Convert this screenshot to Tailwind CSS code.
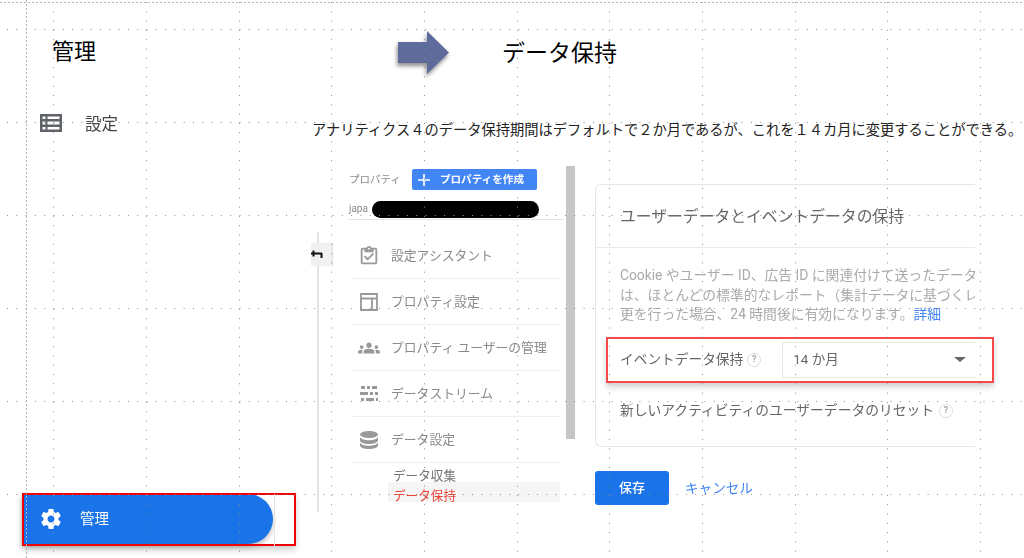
<html>

<head>
    <meta charset="UTF-8">
    <meta name="viewport" content="width=device-width, initial-scale=1.0">
    <title>データ保持</title>
    <script src="https://cdn.jsdelivr.net/npm/@tailwindcss/browser@4"></script>
</head>

<body class="bg-white">
    <div class="relative flex w-[1024px] h-[558px] overflow-hidden bg-white text-black font-['Noto_Sans_CJK_JP',sans-serif]">

        <!-- Left column -->
        <div class="flex flex-col w-[300px] shrink-0 h-full">
            <h1 class="ml-[52px] mt-[34px] text-[22px] leading-[30px]">管理</h1>
            <div class="flex items-center ml-[40px] mt-[47px] h-[24px] text-[#444] blur-[0.3px]">
                <svg class="w-[22px] h-[18px]" viewBox="0 0 22 18" fill="#5f6368">
                    <path d="M0 0h22v18H0zM2.500 2.500v2.500h3V2.500zm5 0v2.500h12V2.500zM2.500 7.500v3h3v-3zm5 0v3h12v-3zM2.500 13v2.500h3V13zm5 0v2.500h12V13z" fill-rule="evenodd" />
                </svg>
                <span class="ml-[23px] text-[16.500px] leading-[24px]">設定</span>
            </div>
            <!-- Active menu -->
            <div class="relative ml-[22px] mt-[359px] w-[251px] h-[50px] flex items-center bg-[#1a73e8] rounded-r-[25px] text-white shadow-[0_3px_5px_rgba(0,0,0,0.25)] blur-[0.3px]">
                <svg class="ml-[17px] w-[24px] h-[24px]" viewBox="0 0 24 24" fill="#fff">
                    <path d="M19.430 12.980c.04-.32.07-.64.07-.98s-.03-.66-.07-.98l2.110-1.650c.19-.15.24-.42.12-.64l-2-3.460c-.12-.22-.39-.3-.61-.22l-2.490 1c-.52-.4-1.080-.73-1.690-.98l-.38-2.650C14.460 2.180 14.250 2 14 2h-4c-.25 0-.46.18-.49.42l-.38 2.650c-.61.25-1.170.59-1.690.98l-2.490-1c-.23-.09-.49 0-.61.22l-2 3.460c-.13.22-.07.49.12.64l2.110 1.650c-.04.32-.07.65-.07.98s.03.66.07.98l-2.110 1.650c-.19.15-.24.42-.12.64l2 3.460c.12.22.39.3.61.22l2.490-1c.52.4 1.080.73 1.690.98l.38 2.650c.03.24.24.42.49.42h4c.25 0 .46-.18.49-.42l.38-2.650c.61-.25 1.170-.59 1.690-.98l2.490 1c.23.09.49 0 .61-.22l2-3.460c.12-.22.07-.49-.12-.64l-2.110-1.650zM12 15.500c-1.930 0-3.500-1.570-3.500-3.500s1.570-3.500 3.500-3.500 3.500 1.570 3.500 3.500-1.570 3.500-3.500 3.500z" />
                </svg>
                <span class="ml-[17px] mb-[2px] text-[14.500px]">管理</span>
            </div>
        </div>

        <!-- Right column -->
        <div class="flex flex-col flex-1 min-w-0">
            <div class="flex items-center ml-[98px] mt-[31px] h-[43px]">
                <svg class="w-[51px] h-[43px] drop-shadow-[-1px_3px_2px_rgba(0,0,0,0.45)]" viewBox="0 0 51 43" fill="#5f6b9b">
                    <path d="M0 11h29V0l22 21.500L29 43V32H0z" />
                </svg>
                <h2 class="ml-[53px] mb-[4px] text-[23px] leading-[30px]">データ保持</h2>
            </div>
            <p class="ml-[12px] mt-[45px] text-[14.260px] leading-[20px] whitespace-nowrap text-[#222]">アナリティクス４のデータ保持期間はデフォルトで２か月であるが、これを１４カ月に変更することができる。</p>

            <!-- Pasted screenshot -->
            <div class="flex mt-[26px] ml-[17px] h-[350px] blur-[0.3px] font-['Roboto','Noto_Sans_CJK_JP',sans-serif]">
                <!-- Side rail -->
                <div class="w-[32px] shrink-0 pt-[67px]">
                    <div class="w-[2px] h-[280px] bg-[#e3e3e3]"></div>
                </div>

                <!-- Property menu -->
                <div class="w-[215px] shrink-0 text-[#8a8a8a]">
                    <div class="flex items-center h-[21px] mt-[4px]">
                        <span class="text-[10.500px] leading-[21px]">プロパティ</span>
                        <button class="flex items-center ml-[11px] w-[125px] h-[21px] bg-[#4285f4] rounded-[2px] text-white text-[10.600px] font-bold">
                            <svg class="ml-[6px] w-[12px] h-[12px]" viewBox="0 0 12 12" stroke="#fff" stroke-width="1.700"><path d="M6 0v12M0 6h12" /></svg>
                            <span class="ml-[10px]">プロパティを作成</span>
                        </button>
                    </div>
                    <div class="flex items-center h-[19px] mt-[11px] border-b border-[#e9e2e2] text-[10px] pb-[4px]">
                        <span>japa</span>
                    </div>

                    <div class="mt-[13px] ml-[2px] w-[209px]">
                        <div class="flex items-center h-[46px] border-b border-[#efefef] text-[12.800px]">
                            <svg class="ml-[7px] w-[22px] h-[22px]" viewBox="0 0 24 24" fill="#999"><path d="M19 3h-4.180C14.400 1.840 13.300 1 12 1c-1.300 0-2.400.84-2.820 2H5c-1.100 0-2 .9-2 2v14c0 1.100.9 2 2 2h14c1.100 0 2-.9 2-2V5c0-1.100-.9-2-2-2zm-7 0c.55 0 1 .45 1 1s-.45 1-1 1-1-.45-1-1 .45-1 1-1zm7 16H5V5h2v3h10V5h2v14z" /><path d="M10.500 17l-4-4 1.410-1.410 2.590 2.580 5.590-5.580L17.500 10z" /></svg>
                            <span class="ml-[11px]">設定アシスタント</span>
                        </div>
                        <div class="flex items-center h-[46px] border-b border-[#efefef] text-[12.800px]">
                            <svg class="ml-[9px] w-[18px] h-[18px]" viewBox="0 0 18 18" fill="none" stroke="#999" stroke-width="1.800"><path d="M1 1h16v16H1zM1 5.500h16M12 5.500V17" /></svg>
                            <span class="ml-[13px]">プロパティ設定</span>
                        </div>
                        <div class="flex items-center h-[46px] border-b border-[#efefef] text-[12.800px]">
                            <svg class="ml-[7px] w-[22px] h-[22px]" viewBox="0 0 24 24" fill="#999"><path d="M12 12.750c1.630 0 3.070.39 4.240.9 1.080.48 1.760 1.560 1.760 2.730V18H6v-1.610c0-1.180.68-2.260 1.760-2.730 1.170-.52 2.610-.91 4.240-.91zM4 13c1.100 0 2-.9 2-2s-.9-2-2-2-2 .9-2 2 .9 2 2 2zm1.130 1.100C4.760 14.040 4.390 14 4 14c-.99 0-1.930.21-2.780.58C.48 14.900 0 15.620 0 16.430V18h4.500v-1.610c0-.83.23-1.610.63-2.290zM20 13c1.100 0 2-.9 2-2s-.9-2-2-2-2 .9-2 2 .9 2 2 2zm4 3.430c0-.81-.48-1.530-1.220-1.850C21.930 14.210 20.990 14 20 14c-.39 0-.76.04-1.130.1.4.68.63 1.460.63 2.290V18H24v-1.570zM12 6c1.660 0 3 1.340 3 3s-1.340 3-3 3-3-1.340-3-3 1.340-3 3-3z" /></svg>
                            <span class="ml-[11px]">プロパティ ユーザーの管理</span>
                        </div>
                        <div class="flex items-center h-[46px] border-b border-[#efefef] text-[12.800px]">
                            <svg class="ml-[9px] w-[18px] h-[18px]" viewBox="0 0 18 18" fill="#999"><path d="M1 1h4v3H1zM7 1h3v3H7zM12 1h5v3h-5zM0 7h8v3H0zM10 7h3v3h-3zM15 7h3v3h-3zM1 13h3v3H1zM6 13h8v3H6zM16 13h2v3h-2z" /></svg>
                            <span class="ml-[13px]">データストリーム</span>
                        </div>
                        <div class="flex items-center h-[46px] border-b border-[#efefef] text-[12.800px]">
                            <svg class="ml-[9px] w-[18px] h-[18px]" viewBox="0 0 18 18" fill="#999"><ellipse cx="9" cy="3.500" rx="9" ry="3.500" /><path d="M0 6c1 2.200 5 3.200 9 3.200S17 8.200 18 6v3.500c0 1.900-4 3.500-9 3.500s-9-1.600-9-3.500z" /><path d="M0 11.500c1 2.200 5 3.200 9 3.200s8-1 9-3.200v3c0 1.900-4 3.500-9 3.500s-9-1.600-9-3.500z" /></svg>
                            <span class="ml-[13px]">データ設定</span>
                        </div>
                        <div class="pl-[37px] mt-[3px]">
                            <p class="pl-[5px] h-[16px] text-[12.600px] leading-[20px] text-[#777]">データ収集</p>
                            <p class="pl-[5px] h-[20px] text-[12.600px] leading-[28px] text-[#ea4335] bg-[#f5f5f5]">データ保持</p>
                        </div>
                    </div>
                </div>

                <!-- Scrollbar -->
                <div class="ml-[2px] mt-[1px] w-[9px] h-[273px] shrink-0 bg-[#c6c6c6]"></div>

                <!-- Retention settings -->
                <div class="ml-[20px] w-[380px] shrink-0">
                    <div class="h-[263px] mt-[19px] border-[1.500px] border-r-0 border-[#e6e6e6] rounded-l-[6px] text-[#666]">
                        <h3 class="flex items-center h-[63px] pl-[24px] pt-[1px] text-[15.800px] border-b-[1.500px] border-[#ebebeb]">ユーザーデータとイベントデータの保持</h3>
                        <div class="pl-[24px] pt-[18px] text-[13.800px] leading-[19.500px] text-[#aaa] whitespace-nowrap overflow-hidden">
                            <p>Cookie やユーザー ID、広告 ID に関連付けて送ったデータ</p>
                            <p>は、ほとんどの標準的なレポート（集計データに基づくレ</p>
                            <p>更を行った場合、24 時間後に有効になります。<span class="text-[#4285f4]">詳細</span></p>
                        </div>
                        <div class="flex items-center pl-[24px] mt-[17px] h-[36px]">
                            <span class="text-[13.700px]">イベントデータ保持</span>
                            <span class="ml-[4px] flex items-center justify-center w-[14px] h-[14px] rounded-full border-[1.500px] border-[#ddd] text-[9px] text-[#aaa] font-bold">?</span>
                            <div class="flex items-center justify-between ml-[21px] flex-1 h-[36px] pl-[10px] pr-[9px] border border-r-0 border-[#e8e8e8] rounded-l-[4px] text-[13.500px]">
                                <span>14 か月</span>
                                <span class="w-0 h-0 border-x-[6px] border-x-transparent border-t-[5px] border-t-[#666]"></span>
                            </div>
                        </div>
                        <div class="flex items-center pl-[24px] mt-[18px] h-[30px]">
                            <span class="text-[13.780px]">新しいアクティビティのユーザーデータのリセット</span>
                            <span class="ml-[5px] flex items-center justify-center w-[14px] h-[14px] rounded-full border-[1.500px] border-[#ddd] text-[9px] text-[#aaa] font-bold">?</span>
                        </div>
                    </div>
                    <div class="flex items-center mt-[24px]">
                        <button class="w-[74px] h-[34px] rounded-[3px] bg-[#1a73e8] text-white text-[13px] font-medium">保存</button>
                        <span class="ml-[16px] text-[13.600px] text-[#4285f4]">キャンセル</span>
                    </div>
                </div>
            </div>
        </div>

        <!-- Overlays: redaction, collapse tab, callouts, slide guides -->
        <div class="absolute left-[372px] top-[201px] w-[167px] h-[17px] rounded-full bg-black"></div>
        <div class="absolute left-[311px] top-[243px] w-[21px] h-[23px] bg-[#f1f1f1] shadow-[1px_0_1px_rgba(0,0,0,0.12)]">
            <svg class="w-[12px] h-[23px]" viewBox="0 0 12 23" fill="none" stroke="#111" stroke-width="2"><path d="M0 10.500H11M2.500 7.500v6M10.500 10v5" /></svg>
        </div>
        <div class="absolute left-[606px] top-[337px] w-[388px] h-[46px] border-2 border-[#f44a4a] shadow-[0_4px_6px_rgba(0,0,0,0.18)]"></div>
        <div class="absolute left-[22px] top-[493px] w-[274px] h-[53px] border-2 border-[#f00000] shadow-[0_4px_6px_rgba(0,0,0,0.18)]"></div>
        <div class="absolute left-[274px] top-[494px] w-[1px] h-[56px] bg-[#e4e4e4]"></div>

        <svg class="absolute inset-0 w-[1024px] h-[558px] pointer-events-none" viewBox="0 0 1024 558" fill="none">
            <g stroke="#8c8c8c" stroke-width="1" stroke-dasharray="1 8.300">
                <path d="M53.500 2V558M146.500 2V558M239.500 2V558M331.500 2V558M424.500 2V558M517.500 2V558M609.500 2V558M702.500 2V558M795.500 2V558M887.500 2V558M980.500 2V558" />
                <path d="M7 29.500H1024M7 122.500H1024M7 215.500H1024M7 308.500H1024M7 401.500H1024M7 494.500H1024" />
            </g>
            <g stroke="#b5b5b5" stroke-width="1" stroke-dasharray="2 2">
                <path d="M26.500 0V558M0 2.500H1024" />
            </g>
        </svg>
    </div>
</body>

</html>
